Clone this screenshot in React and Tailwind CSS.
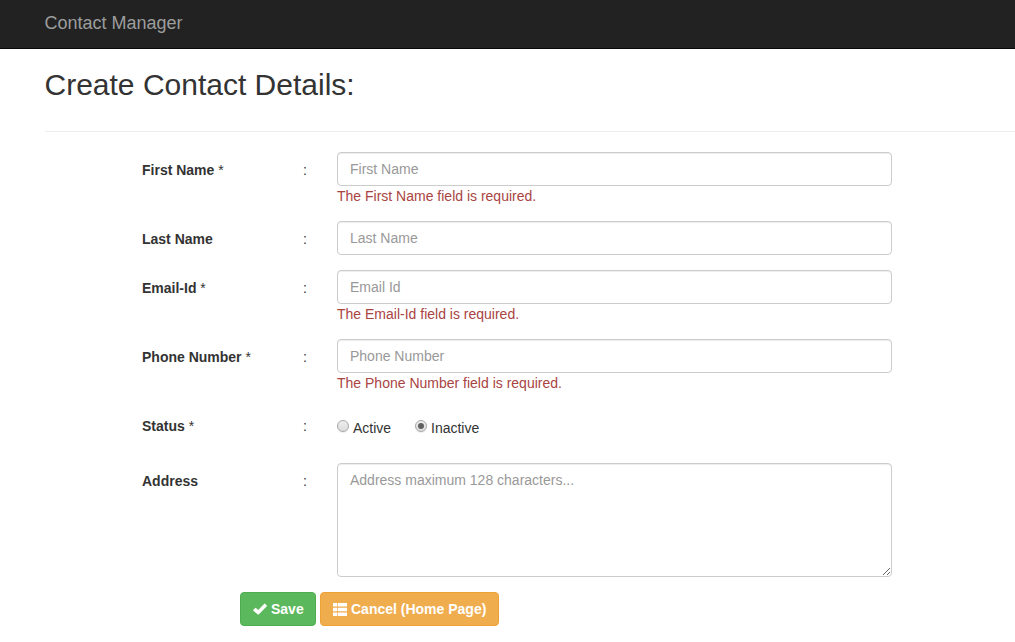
const fields = [
  { label: 'First Name', star: true, ph: 'First Name', error: 'The First Name field is required.' },
  { label: 'Last Name', ph: 'Last Name' },
  { label: 'Email-Id', star: true, ph: 'Email Id', error: 'The Email-Id field is required.' },
  { label: 'Phone Number', star: true, ph: 'Phone Number', error: 'The Phone Number field is required.' },
];

function Row({ label, star, children }) {
  return (
    <div className="mb-[15px] flex">
      <div className="w-[161px] shrink-0 pt-[8px]">
        <span className="font-bold">{label}</span>
        {star && <span> *</span>}
      </div>
      <div className="w-[34px] shrink-0 pt-[8px]">:</div>
      <div className="w-[555px]">{children}</div>
    </div>
  );
}

function Radio({ checked }) {
  return (
    <span className="mt-[2px] flex size-[12px] items-center justify-center rounded-full border border-[#a8a8a8] bg-linear-to-b from-[#eeeeee] to-[#dddddd] shadow-[0_1px_1px_rgba(0,0,0,0.08)]">
      {checked && <span className="size-[6px] rounded-full bg-[#606060]" />}
    </span>
  );
}

export default function App() {
  return (
    <div className="h-[642px] w-full overflow-hidden bg-white font-['Liberation_Sans',Arial,sans-serif] text-[14px] leading-[20px] text-[#333333]">
      <header className="h-[49px] border-b border-[#080808] bg-[#222222] pl-[44.5px] pt-[13px] text-[18px] text-[#9d9d9d]">
        Contact Manager
      </header>
      <main className="pl-[45px]">
        <h2 className="-ml-[0.5px] pt-[19px] text-[30px] leading-[33px]">Create Contact Details:</h2>
        <hr className="mb-[20px] mt-[30px] border-[#eeeeee]" />
        <form className="pl-[97px]">
          {fields.map((f) => (
            <Row key={f.label} label={f.label} star={f.star}>
              <input
                placeholder={f.ph}
                className="block h-[34px] w-full rounded-[4px] border border-[#cccccc] px-[12px] shadow-[inset_0_1px_1px_rgba(0,0,0,0.075)] placeholder:text-[#999999]"
              />
              {f.error && <div className="text-[#a94442]">{f.error}</div>}
            </Row>
          ))}
          <Row label="Status" star>
            <div className="flex h-[40px] pt-[10px]">
              <label className="flex w-[78px] gap-[4px]"><Radio />Active</label>
              <label className="flex gap-[4px]"><Radio checked />Inactive</label>
            </div>
          </Row>
          <Row label="Address">
            <textarea
              placeholder="Address maximum 128 characters..."
              className="block h-[114px] w-full rounded-[4px] border border-[#cccccc] px-[12px] py-[6px] shadow-[inset_0_1px_1px_rgba(0,0,0,0.075)] placeholder:text-[#999999]"
            />
          </Row>
          <div className="flex gap-[4px] pl-[98px] font-bold text-white">
            <button type="button" className="flex h-[34px] w-[76px] items-center rounded-[4px] border border-[#4cae4c] bg-[#5cb85c] pl-[12px]">
              <svg viewBox="0 0 14 12" className="mr-[4px] h-[12px] w-[14px] fill-white">
                <path d="M.2 6.9 2.2 4.9Q2.6 4.6 3 4.9L5.2 7 11.3.8Q11.7.4 12.1.8L13.8 2.5Q14.2 2.9 13.8 3.3L5.7 11.4Q5.2 11.8 4.8 11.4L.2 7.6Q-.1 7.2.2 6.9Z" />
              </svg>
              Save
            </button>
            <button type="button" className="flex h-[34px] w-[179px] items-center rounded-[4px] border border-[#eea236] bg-[#f0ad4e] pl-[12px]">
              <svg viewBox="0 0 14 13" className="mr-[4px] h-[13px] w-[14px] fill-white">
                <path d="M0 0h4v3.4H0zM4.7 0H14v3.4H4.7zM0 4.8h4v3.4H0zM4.7 4.8H14v3.4H4.7zM0 9.6h4V13H0zM4.7 9.6H14V13H4.7z" />
              </svg>
              Cancel (Home Page)
            </button>
          </div>
        </form>
      </main>
    </div>
  );
}
